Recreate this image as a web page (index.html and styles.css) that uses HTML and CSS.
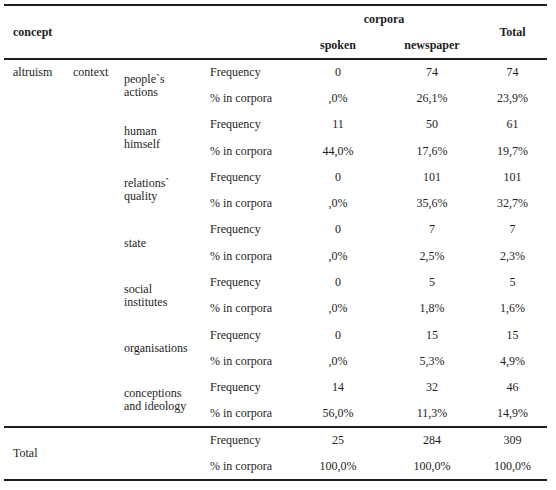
FILE: index.html
```html
<!DOCTYPE html>
<html>
<head>
<meta charset="utf-8">
<link rel="stylesheet" href="styles.css">
</head>
<body>
<table class="crosstab">
  <colgroup>
    <col class="c-concept"><col class="c-context"><col class="c-sub"><col class="c-stat">
    <col class="c-spoken"><col class="c-news"><col class="c-total">
  </colgroup>
  <thead>
    <tr class="hrow">
      <th rowspan="2" colspan="4" class="left">concept</th>
      <th colspan="2">corpora</th>
      <th rowspan="2">Total</th>
    </tr>
    <tr class="hrow">
      <th>spoken</th>
      <th>newspaper</th>
    </tr>
  </thead>
  <tbody class="data">
    <tr><td rowspan="14" class="top">altruism</td><td rowspan="14" class="top">context</td><td rowspan="2" class="sub">people`s<br>actions</td><td>Frequency</td><td class="num">0</td><td class="num">74</td><td class="num">74</td></tr>
    <tr><td>% in corpora</td><td class="num">,0%</td><td class="num">26,1%</td><td class="num">23,9%</td></tr>
    <tr><td rowspan="2" class="sub">human<br>himself</td><td>Frequency</td><td class="num">11</td><td class="num">50</td><td class="num">61</td></tr>
    <tr><td>% in corpora</td><td class="num">44,0%</td><td class="num">17,6%</td><td class="num">19,7%</td></tr>
    <tr><td rowspan="2" class="sub">relations`<br>quality</td><td>Frequency</td><td class="num">0</td><td class="num">101</td><td class="num">101</td></tr>
    <tr><td>% in corpora</td><td class="num">,0%</td><td class="num">35,6%</td><td class="num">32,7%</td></tr>
    <tr><td rowspan="2" class="sub">state</td><td>Frequency</td><td class="num">0</td><td class="num">7</td><td class="num">7</td></tr>
    <tr><td>% in corpora</td><td class="num">,0%</td><td class="num">2,5%</td><td class="num">2,3%</td></tr>
    <tr><td rowspan="2" class="sub">social<br>institutes</td><td>Frequency</td><td class="num">0</td><td class="num">5</td><td class="num">5</td></tr>
    <tr><td>% in corpora</td><td class="num">,0%</td><td class="num">1,8%</td><td class="num">1,6%</td></tr>
    <tr><td rowspan="2" class="sub">organisations</td><td>Frequency</td><td class="num">0</td><td class="num">15</td><td class="num">15</td></tr>
    <tr><td>% in corpora</td><td class="num">,0%</td><td class="num">5,3%</td><td class="num">4,9%</td></tr>
    <tr><td rowspan="2" class="sub">conceptions<br>and ideology</td><td>Frequency</td><td class="num">14</td><td class="num">32</td><td class="num">46</td></tr>
    <tr><td>% in corpora</td><td class="num">56,0%</td><td class="num">11,3%</td><td class="num">14,9%</td></tr>
  </tbody>
  <tbody class="totals">
    <tr><td rowspan="2" colspan="3" class="sub">Total</td><td>Frequency</td><td class="num">25</td><td class="num">284</td><td class="num">309</td></tr>
    <tr><td>% in corpora</td><td class="num">100,0%</td><td class="num">100,0%</td><td class="num">100,0%</td></tr>
  </tbody>
</table>
</body>
</html>
```
FILE: styles.css
```css
html, body {
  margin: 0;
  background: #ffffff;
}
body {
  padding: 4px 0 0 4px;
  font-family: Georgia, "Liberation Serif", serif;
  font-size: 12px;
  color: #1e1e1e;
}
.crosstab {
  border-collapse: collapse;
  table-layout: fixed;
  width: 543px;
  border-top: 2px solid #1e1e1e;
  border-bottom: 2px solid #1e1e1e;
}
.c-concept { width: 60px; }
.c-context { width: 51px; }
.c-sub { width: 86px; }
.c-stat { width: 89px; }
.c-spoken { width: 96px; }
.c-news { width: 92px; }
.c-total { width: 69px; }

.crosstab th, .crosstab td {
  padding: 0;
  line-height: 13px;
  vertical-align: middle;
  text-align: left;
  white-space: nowrap;
}
.crosstab th {
  font-weight: bold;
  text-align: center;
}
.crosstab th.left {
  text-align: left;
  padding-left: 9px;
}
.hrow { height: 27px; }
thead { border-bottom: 2px solid #1e1e1e; }
.data tr, .totals tr { height: 26.3px; }
.totals { border-top: 2px solid #1e1e1e; }
.crosstab td { padding-left: 9px; }
.crosstab td.top {
  vertical-align: top;
  padding-top: 6px;
}
.crosstab td.num {
  text-align: center;
  padding-left: 0;
}
```
